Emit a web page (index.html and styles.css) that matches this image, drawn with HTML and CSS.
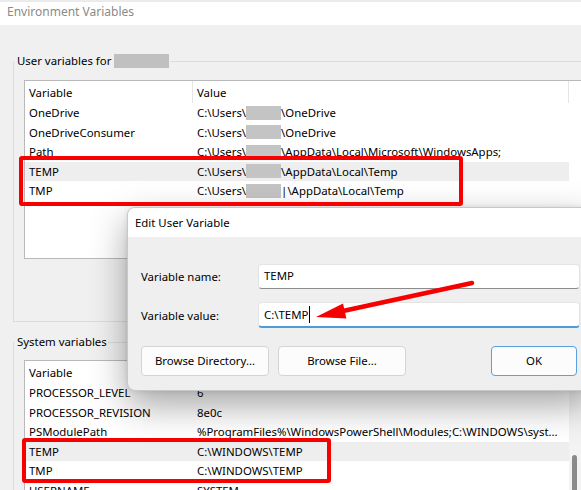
FILE: index.html
```html
<!DOCTYPE html>
<html lang="en">
<head>
<meta charset="utf-8">
<title>Environment Variables</title>
<link rel="stylesheet" href="styles.css">
</head>
<body>
<div class="window">
  <div class="titlebar">Environment Variables</div>

  <fieldset class="group group-user">
    <legend>User variables for <span class="redact redact-name"></span></legend>
    <div class="listbox listbox-user">
      <div class="rows">
        <div class="row head"><div class="c1">Variable</div><div class="c2">Value</div></div>
        <div class="row"><div class="c1">OneDrive</div><div class="c2">C:\Users\<span class="redact"></span>\OneDrive</div></div>
        <div class="row"><div class="c1">OneDriveConsumer</div><div class="c2">C:\Users\<span class="redact"></span>\OneDrive</div></div>
        <div class="row"><div class="c1">Path</div><div class="c2">C:\Users\<span class="redact"></span>\AppData\Local\Microsoft\WindowsApps;</div></div>
        <div class="row selected"><div class="c1">TEMP</div><div class="c2">C:\Users\<span class="redact"></span>\AppData\Local\Temp</div></div>
        <div class="row"><div class="c1">TMP</div><div class="c2">C:\Users\<span class="redact"></span>|\AppData\Local\Temp</div></div>
      </div>
      <div class="scroll-space"></div>
    </div>
  </fieldset>

  <fieldset class="group group-system">
    <legend>System variables</legend>
    <div class="listbox listbox-system">
      <div class="rows">
        <div class="row head"><div class="c1">Variable</div><div class="c2">Value</div></div>
        <div class="row"><div class="c1">PROCESSOR_LEVEL</div><div class="c2">6</div></div>
        <div class="row"><div class="c1">PROCESSOR_REVISION</div><div class="c2">8e0c</div></div>
        <div class="row"><div class="c1">PSModulePath</div><div class="c2">%ProgramFiles%\WindowsPowerShell\Modules;C:\WINDOWS\syst...</div></div>
        <div class="row selected"><div class="c1">TEMP</div><div class="c2">C:\WINDOWS\TEMP</div></div>
        <div class="row"><div class="c1">TMP</div><div class="c2">C:\WINDOWS\TEMP</div></div>
        <div class="row"><div class="c1">USERNAME</div><div class="c2">SYSTEM</div></div>
      </div>
      <div class="scrollbar"><div class="thumb"></div></div>
    </div>
  </fieldset>

  <div class="dialog">
    <div class="dialog-title">Edit User Variable</div>
    <div class="dialog-body">
      <div class="field">
        <label class="field-label">Variable name:</label>
        <div class="input">TEMP</div>
      </div>
      <div class="field field-value">
        <label class="field-label">Variable value:</label>
        <div class="input input-focus">C:\TEMP<span class="caret"></span></div>
      </div>
      <div class="buttons">
        <div class="btn btn-wide">Browse Directory...</div>
        <div class="btn btn-wide">Browse File...</div>
        <div class="btn btn-ok">OK</div>
      </div>
    </div>
  </div>

  <div class="mark mark-user"></div>
  <div class="mark mark-system"></div>

  <svg class="arrow" width="581" height="490" viewBox="0 0 581 490">
    <line x1="472" y1="283" x2="343" y2="311" stroke="#f70000" stroke-width="4.5" stroke-linecap="round"/>
    <polygon points="316,317 343,303.6 346.4,318.4" fill="#f70000"/>
  </svg>
</div>
</body>
</html>
```

FILE: styles.css
```css
* {
  box-sizing: border-box;
}

html, body {
  margin: 0;
  padding: 0;
}

body {
  width: 581px;
  height: 490px;
  overflow: hidden;
  background: #f0f0f0;
  font-family: "Noto Sans", "Open Sans", sans-serif;
  font-size: 11.4px;
  color: #000;
}

.window {
  position: relative;
  width: 581px;
  height: 490px;
  overflow: hidden;
}

.titlebar {
  height: 25px;
  border-top: 2px solid #ebebeb;
  background: #fff;
  color: #8a8a8a;
  font-size: 12px;
  line-height: 20px;
  padding-left: 7px;
}

.group {
  margin: 28px 0 0 13px;
  width: 620px;
  min-width: 0;
  border: 1px solid #dcdcdc;
  padding: 11px 0 62px 0;
}

.group-system {
  margin-top: 12px;
  padding-top: 10px;
  padding-bottom: 0;
}

.group legend {
  padding: 0 1px 0 3px;
  margin: 0;
  height: 16px;
  line-height: 16px;
}

.redact {
  display: inline-block;
  width: 35px;
  height: 14px;
  background: #c4c4c4;
  vertical-align: middle;
  margin-top: -2px;
}

.redact-name {
  width: 55px;
  background: #c0c0c0;
}

.listbox {
  margin-left: 10px;
  width: 558px;
  background: #fff;
  border: 1px solid #b9b9b9;
  display: flex;
}

.listbox-user {
  height: 179px;
}

.listbox-system {
  height: 160px;
}

.rows {
  width: 544px;
  flex: none;
}

.row {
  display: flex;
  height: 19.5px;
  line-height: 20px;
  white-space: nowrap;
}

.row.head {
  height: 22px;
  line-height: 23px;
}

.row.selected {
  background: #eeeeee;
}

.c1 {
  width: 168px;
  flex: none;
  padding-left: 4px;
  overflow: hidden;
}

.c2 {
  flex: 1;
  padding-left: 4px;
  overflow: hidden;
}

.head .c1,
.head .c2 {
  border-right: 1px solid #e5e5e5;
}

.scroll-space {
  flex: 1;
}

.scrollbar {
  flex: 1;
  background: #f3f3f3;
  padding-top: 94px;
  padding-left: 3px;
}

.thumb {
  width: 5px;
  height: 60px;
  border-radius: 3px;
  background: #8a8a8a;
}

/* Dialog */
.dialog {
  position: absolute;
  left: 127px;
  top: 207px;
  width: 464px;
  height: 184px;
  background: #efefef;
  border: 1px solid #c8c8c8;
  border-radius: 8px;
  box-shadow: 0 14px 36px rgba(0, 0, 0, 0.36), 0 0 5px rgba(0, 0, 0, 0.1);
  overflow: hidden;
}

.dialog-title {
  height: 29px;
  background: #fff;
  padding-left: 7px;
  line-height: 30px;
}

.dialog-body {
  padding: 27px 13px 0 13px;
}

.field {
  display: flex;
  align-items: center;
}

.field-value {
  margin-top: 13px;
}

.field-label {
  width: 117px;
  flex: none;
}

.input {
  width: 322px;
  flex: none;
  height: 25px;
  line-height: 22px;
  background: #fff;
  border: 1px solid #e4e4e4;
  border-bottom-color: #8c8c8c;
  border-radius: 4px;
  padding-left: 5px;
}

.input-focus {
  height: 26px;
  border-bottom: 2px solid #4f9ad9;
  line-height: 23px;
}

.caret {
  display: inline-block;
  width: 1px;
  height: 17px;
  background: #000;
  vertical-align: middle;
  margin-left: 1px;
  margin-top: -2px;
}

.buttons {
  display: flex;
  gap: 9px;
  margin-top: 18px;
}

.btn {
  height: 30px;
  line-height: 28px;
  text-align: center;
  background: #fcfcfc;
  border: 1px solid #d4d4d4;
  border-radius: 4px;
}

.btn-wide {
  width: 128px;
}

.btn-ok {
  width: 86px;
  margin-left: auto;
  border-color: #5a9fe0;
}

/* Annotations */
.mark {
  position: absolute;
  border: 4.5px solid #f70000;
  border-radius: 3px;
}

.mark-user {
  left: 19px;
  top: 156px;
  width: 444px;
  height: 50px;
}

.mark-system {
  left: 22px;
  top: 438px;
  width: 309px;
  height: 45px;
}

.arrow {
  position: absolute;
  left: 0;
  top: 0;
  pointer-events: none;
}
```
